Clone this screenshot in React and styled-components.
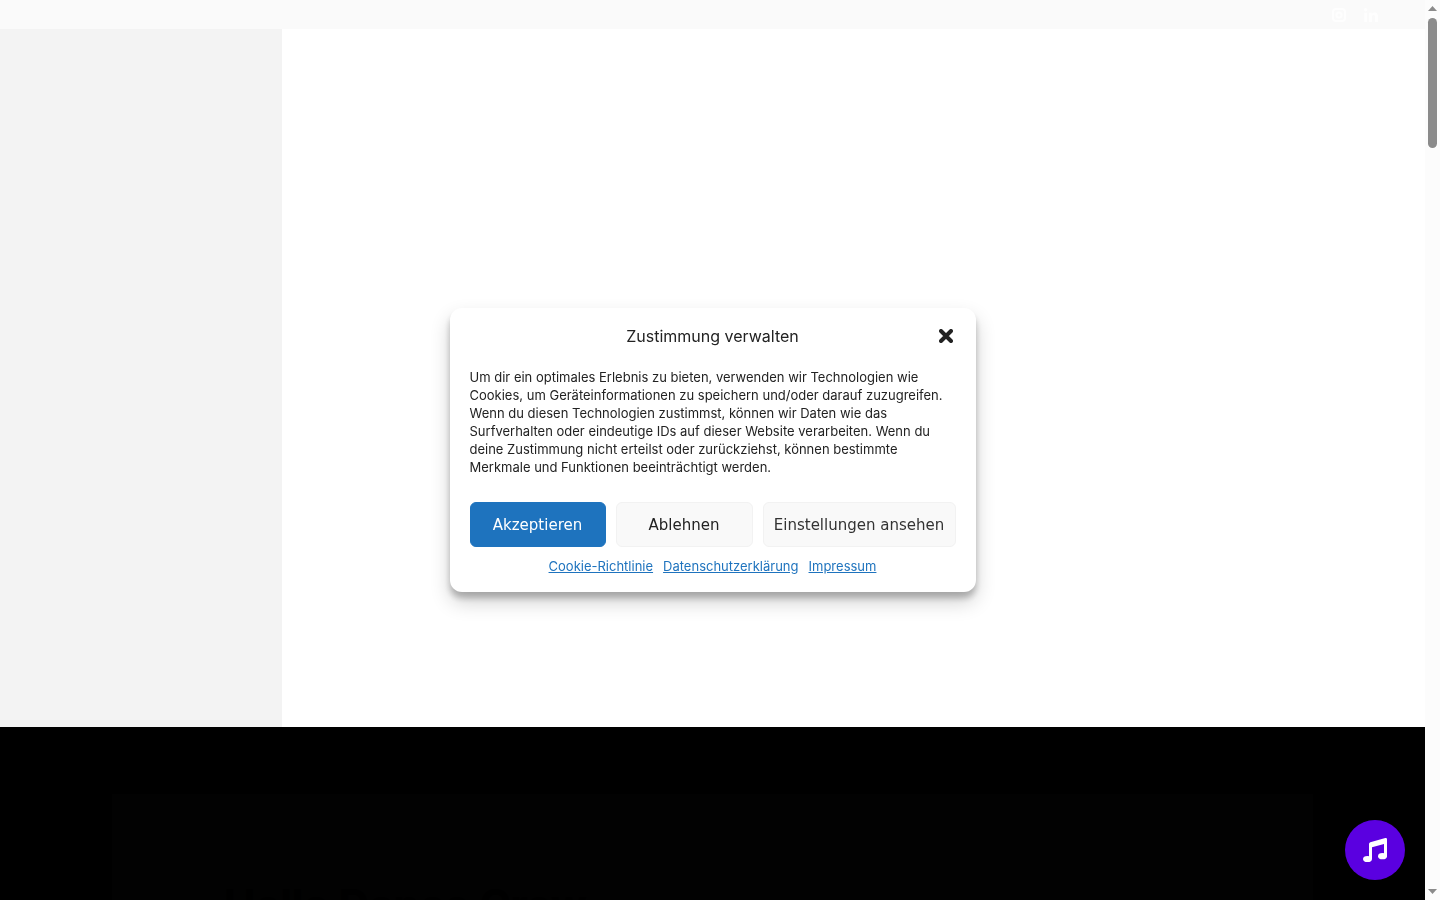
import React from "react";
import styled, { createGlobalStyle } from "styled-components";

const GlobalStyle = createGlobalStyle`
  * { box-sizing: border-box; }
  body { margin: 0; background: #fff; color: #222; font-family: Inter, "Liberation Sans", sans-serif; }
`;

const Viewport = styled.div`
  display: grid;
  grid-template-columns: minmax(0, 1fr) 15px;
  height: 100vh;
  overflow: hidden;
`;

const Page = styled.div`
  display: flex;
  flex-direction: column;
  min-width: 0;
  overflow: hidden;
`;

const TopBar = styled.header`
  display: flex;
  flex: none;
  justify-content: flex-end;
  align-items: center;
  gap: 18px;
  height: 29px;
  padding-right: 47px;
  background: #fafafa;
`;

const SocialLink = styled.a`
  display: flex;
  color: #fefefe;
`;

const Hero = styled.section`
  display: flex;
  flex: none;
  height: 698px;
`;

const SidePanel = styled.aside`
  width: 282px;
  background: #f3f3f3;
`;

const DarkSection = styled.section`
  flex: none;
  padding: 67px 112px 0;
  background: #000;
`;

const IntroCard = styled.div`
  height: 220px;
  padding: 84px 112px 0;
  background: #020202;
`;

const IntroTitle = styled.h1`
  margin: 0;
  color: #000;
  font-size: 42px;
  line-height: 54px;
  font-weight: 700;
`;

const ScrollTrack = styled.div`
  display: flex;
  flex-direction: column;
  justify-content: space-between;
  align-items: center;
  padding: 6px 0;
  background: #fcfcfc;
`;

const ScrollThumb = styled.div`
  width: 9px;
  height: 130px;
  margin-top: 7px;
  margin-bottom: auto;
  border-radius: 5px;
  background: #8b8b8b;
`;

const Overlay = styled.div`
  position: fixed;
  inset: 0 15px 0 0;
  display: flex;
  align-items: center;
  justify-content: center;
  pointer-events: none;
`;

const Dialog = styled.section`
  display: grid;
  gap: 10px;
  width: 526px;
  padding: 15px 20px;
  border-radius: 12px;
  background: #fff;
  box-shadow: rgba(0, 0, 0, 0.19) 0 10px 20px, rgba(0, 0, 0, 0.23) 0 6px 6px;
  pointer-events: auto;
`;

const DialogHeader = styled.div`
  display: grid;
  grid-template-columns: 20px 1fr 20px;
  align-items: center;
  height: 26px;
`;

const DialogTitle = styled.h2`
  grid-column: 2;
  margin: 0;
  text-align: center;
  font-size: 16px;
  line-height: 26px;
  font-weight: 400;
`;

const CloseButton = styled.button`
  display: flex;
  justify-content: center;
  padding: 0;
  border: 0;
  background: none;
  color: #222;
  cursor: pointer;
`;

const Message = styled.p`
  margin: 0;
  padding: 9px 0 16px;
  font-size: 13px;
  line-height: 18px;
`;

const Actions = styled.div`
  display: grid;
  grid-template-columns: 136px 1fr 193px;
  gap: 10px;
`;

const ActionButton = styled.button`
  height: 45px;
  padding: 0;
  border: 1px solid ${(p) => (p.$primary ? "#1e73be" : "#f2f2f2")};
  border-radius: 6px;
  background: ${(p) => (p.$primary ? "#1e73be" : "#f9f9f9")};
  color: ${(p) => (p.$primary ? "#fff" : p.$muted ? "#333" : "#222")};
  font-family: "DejaVu Sans", sans-serif;
  font-size: 15px;
  white-space: nowrap;
  cursor: pointer;
`;

const Links = styled.nav`
  display: flex;
  justify-content: center;
  gap: 10px;
  padding-bottom: 2px;
`;

const DocumentLink = styled.a`
  color: #1e73be;
  font-size: 13px;
  line-height: 18px;
  text-decoration: underline;
`;

const MusicButton = styled.button`
  position: fixed;
  right: 35px;
  bottom: 20px;
  display: flex;
  align-items: center;
  justify-content: center;
  width: 60px;
  height: 60px;
  padding: 0;
  border: 0;
  border-radius: 50%;
  background: #5a00e0;
  color: #fff;
  cursor: pointer;
`;

export default function App() {
  return (
    <>
      <GlobalStyle />
      <Viewport>
        <Page>
          <TopBar>
            <SocialLink href="#instagram" aria-label="Instagram">
              <svg width="14" height="14" viewBox="0 0 14 14" fill="none" stroke="currentColor" strokeWidth="2">
                <rect x="1" y="1" width="12" height="12" rx="3" />
                <circle cx="7" cy="7" r="2.5" />
              </svg>
            </SocialLink>
            <SocialLink href="#linkedin" aria-label="LinkedIn">
              <svg width="14" height="14" viewBox="0 0 448 448" fill="currentColor">
                <path d="M100 448H7V149h93zM53 108a54 54 0 1 1 0-108 54 54 0 0 1 0 108zM448 448h-93V302c0-35-1-79-48-79-49 0-56 38-56 77v148h-93V149h89v41h1c13-24 43-48 88-48 94 0 112 62 112 142z" />
              </svg>
            </SocialLink>
          </TopBar>
          <Hero>
            <SidePanel />
          </Hero>
          <DarkSection>
            <IntroCard>
              <IntroTitle>Hello Dance Crew</IntroTitle>
            </IntroCard>
          </DarkSection>
        </Page>
        <ScrollTrack aria-hidden="true">
          <svg width="9" height="5" viewBox="0 0 9 5"><path d="M0 5 4.5 0 9 5z" fill="#8b8b8b" /></svg>
          <ScrollThumb />
          <svg width="9" height="5" viewBox="0 0 9 5"><path d="M0 0 4.5 5 9 0z" fill="#8b8b8b" /></svg>
        </ScrollTrack>
      </Viewport>
      <MusicButton aria-label="Musik">
        <svg width="26" height="26" viewBox="0 0 26 26" fill="currentColor">
          <path d="M7 7Q7 5.700 8.300 5.300L23.300 1.100Q25 .700 25 2.300V19.200H22V6.900L10 10.300V22H7z" />
          <ellipse cx="5.500" cy="22" rx="4.500" ry="3.100" />
          <ellipse cx="20.500" cy="19.200" rx="4.500" ry="3.100" />
        </svg>
      </MusicButton>
      <Overlay>
        <Dialog role="dialog" aria-labelledby="consent-title">
          <DialogHeader>
            <DialogTitle id="consent-title">Zustimmung verwalten</DialogTitle>
            <CloseButton aria-label="Dialog schließen">
              <svg width="14" height="14" viewBox="0 0 14 14" fill="none" stroke="currentColor" strokeWidth="4" strokeLinecap="round">
                <path d="M2 2l10 10M12 2 2 12" />
              </svg>
            </CloseButton>
          </DialogHeader>
          <Message>
            Um dir ein optimales Erlebnis zu bieten, verwenden wir Technologien wie<br />
            Cookies, um Geräteinformationen zu speichern und/oder darauf zuzugreifen.<br />
            Wenn du diesen Technologien zustimmst, können wir Daten wie das<br />
            Surfverhalten oder eindeutige IDs auf dieser Website verarbeiten. Wenn du<br />
            deine Zustimmung nicht erteilst oder zurückziehst, können bestimmte<br />
            Merkmale und Funktionen beeinträchtigt werden.
          </Message>
          <Actions>
            <ActionButton $primary>Akzeptieren</ActionButton>
            <ActionButton>Ablehnen</ActionButton>
            <ActionButton $muted>Einstellungen ansehen</ActionButton>
          </Actions>
          <Links>
            <DocumentLink href="#cookies">Cookie-Richtlinie</DocumentLink>
            <DocumentLink href="#datenschutz">Datenschutzerklärung</DocumentLink>
            <DocumentLink href="#impressum">Impressum</DocumentLink>
          </Links>
        </Dialog>
      </Overlay>
    </>
  );
}
